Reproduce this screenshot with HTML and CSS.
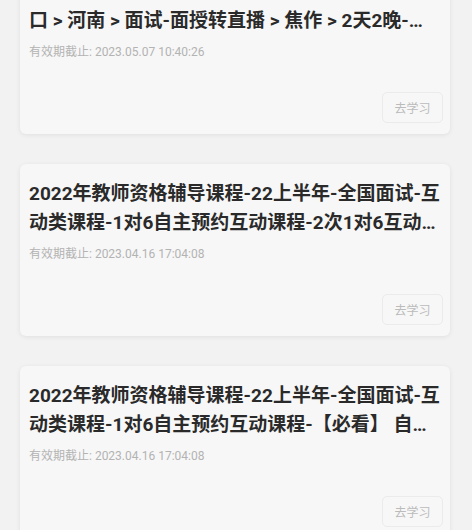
FILE: index.html
```html
<!DOCTYPE html>
<html lang="zh-CN">
<head>
    <meta charset="UTF-8">
    <meta name="viewport" content="width=device-width, initial-scale=1.0">
    <title>我的课程</title>
    <link rel="stylesheet" href="styles.css">
</head>
<body>
    <div class="course-list">
        <div class="course-card">
            <div class="course-title">2023上半年-教师资格面试-面授课程-全国分省入口 &gt; 河南 &gt; 面试-面授转直播 &gt; 焦作 &gt; 2天2晚-结构化+试讲</div>
            <div class="course-date">有效期截止: 2023.05.07 10:40:26</div>
            <div class="course-actions">
                <button class="study-btn">去学习</button>
            </div>
        </div>

        <div class="course-card">
            <div class="course-title">2022年教师资格辅导课程-22上半年-全国面试-互动类课程-1对6自主预约互动课程-2次1对6互动课程</div>
            <div class="course-date">有效期截止: 2023.04.16 17:04:08</div>
            <div class="course-actions">
                <button class="study-btn">去学习</button>
            </div>
        </div>

        <div class="course-card">
            <div class="course-title">2022年教师资格辅导课程-22上半年-全国面试-互动类课程-1对6自主预约互动课程-【必看】 自主预约说明</div>
            <div class="course-date">有效期截止: 2023.04.16 17:04:08</div>
            <div class="course-actions">
                <button class="study-btn">去学习</button>
            </div>
        </div>
    </div>
</body>
</html>
```

FILE: styles.css
```css
body {
    margin: 0;
    background-color: #f2f2f2;
    font-family: Roboto, "Noto Sans CJK SC", sans-serif;
    color: #2a2a2a;
    overflow: hidden;
}

/* list is scrolled, first card partly above the top */
.course-list {
    margin-top: -38px;
    padding: 0 22px 0 20px;
    display: flex;
    flex-direction: column;
    gap: 30px;
}

.course-card {
    background: #f7f7f7;
    border-radius: 6px;
    box-shadow: 0 1px 5px rgba(0, 0, 0, 0.08);
    padding: 15px 7px 11px 9px;
}

.course-title {
    font-size: 19px;
    font-weight: bold;
    line-height: 29px;
    height: 58px;
    margin-right: 2px;
    overflow: hidden;
    display: -webkit-box;
    -webkit-line-clamp: 2;
    -webkit-box-orient: vertical;
}

.course-date {
    margin-top: 9px;
    font-size: 12px;
    line-height: 16px;
    color: #b3b3b3;
}

.course-actions {
    display: flex;
    justify-content: flex-end;
    margin-top: 32px;
}

.study-btn {
    width: 61px;
    height: 31px;
    border: 1px solid #ebebeb;
    border-radius: 5px;
    background: #f7f7f7;
    font-family: Roboto, "Noto Sans CJK SC", sans-serif;
    font-size: 12px;
    color: #bbbbbb;
    padding: 0;
}
```
